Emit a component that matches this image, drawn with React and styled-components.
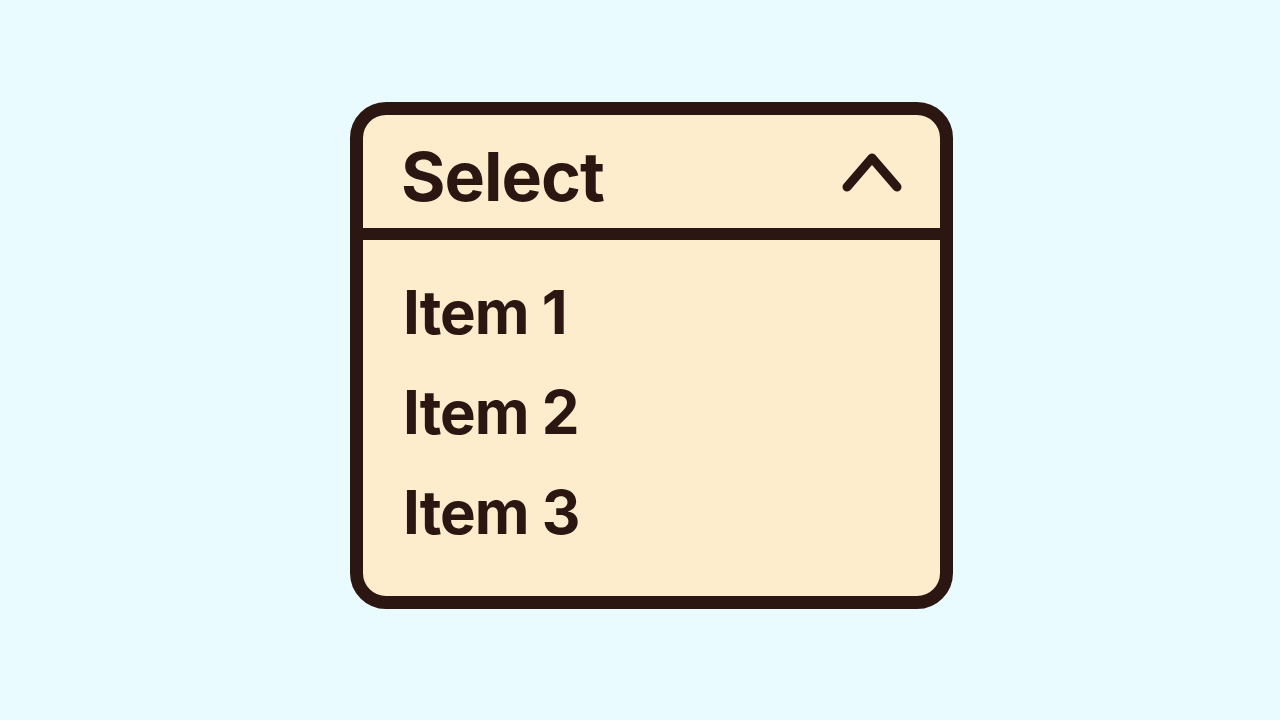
import React from "react";
import styled, { createGlobalStyle } from "styled-components";

const Global = createGlobalStyle`
  html, body { margin: 0; padding: 0; }
  body {
    background: #eafbff;
    font-family: Inter, "Noto Sans", sans-serif;
  }
`;

const Page = styled.div`
  width: 1280px;
  height: 720px;
  display: flex;
  align-items: flex-start;
  justify-content: center;
  padding-top: 102px;
  box-sizing: border-box;
`;

const Dropdown = styled.div`
  width: 603px;
  height: 507px;
  box-sizing: border-box;
  margin-left: 23px;
  border: 13px solid #2c1612;
  border-radius: 36px;
  background: #fdedcd;
  display: flex;
  flex-direction: column;
  overflow: hidden;
`;

const Header = styled.div`
  height: 125px;
  box-sizing: border-box;
  border-bottom: 12px solid #2c1612;
  display: flex;
  align-items: center;
  justify-content: space-between;
  padding: 0 36px 0 38px;
`;

const Title = styled.span`
  font-size: 68px;
  font-weight: 700;
  color: #2c1612;
  letter-spacing: -1px;
  line-height: 1;
  margin-top: 8px;
`;

const Chevron = styled.svg`
  width: 64px;
  height: 44px;
  display: block;
`;

const List = styled.ul`
  list-style: none;
  margin: 0;
  padding: 22px 0 0 40px;
  display: flex;
  flex-direction: column;
`;

const Item = styled.li`
  font-size: 60px;
  font-weight: 700;
  color: #2c1612;
  letter-spacing: -1px;
  line-height: 100px;
  height: 100px;
`;

export default function App() {
  return (
    <>
      <Global />
      <Page>
        <Dropdown>
          <Header>
            <Title>Select</Title>
            <Chevron viewBox="0 0 64 44" fill="none">
              <path
                d="M7 37 L32 8 L57 37"
                stroke="#2c1612"
                strokeWidth="9"
                strokeLinecap="round"
                strokeLinejoin="round"
              />
            </Chevron>
          </Header>
          <List>
            <Item>Item 1</Item>
            <Item>Item 2</Item>
            <Item>Item 3</Item>
          </List>
        </Dropdown>
      </Page>
    </>
  );
}
